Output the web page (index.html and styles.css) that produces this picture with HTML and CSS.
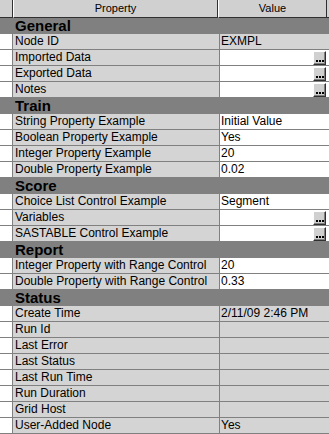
FILE: index.html
```html
<!DOCTYPE html>
<html>
<head>
<meta charset="utf-8">
<link rel="stylesheet" href="styles.css">
</head>
<body>
<div class="grid">
  <div class="head">
    <div class="hind"></div>
    <div class="hcell hname">Property</div>
    <div class="hcell hval">Value</div>
    <div class="hrest"></div>
  </div>

  <div class="cat">General</div>
  <div class="row"><div class="ind"></div><div class="name">Node ID</div><div class="val ro">EXMPL</div></div>
  <div class="row"><div class="ind"></div><div class="name">Imported Data</div><div class="val"><span></span><span class="btn"><i></i><i></i><i></i></span></div></div>
  <div class="row"><div class="ind"></div><div class="name">Exported Data</div><div class="val"><span></span><span class="btn"><i></i><i></i><i></i></span></div></div>
  <div class="row"><div class="ind"></div><div class="name">Notes</div><div class="val"><span></span><span class="btn"><i></i><i></i><i></i></span></div></div>

  <div class="cat">Train</div>
  <div class="row"><div class="ind"></div><div class="name">String Property Example</div><div class="val">Initial Value</div></div>
  <div class="row"><div class="ind"></div><div class="name">Boolean Property Example</div><div class="val">Yes</div></div>
  <div class="row"><div class="ind"></div><div class="name">Integer Property Example</div><div class="val">20</div></div>
  <div class="row"><div class="ind"></div><div class="name">Double Property Example</div><div class="val">0.02</div></div>

  <div class="cat">Score</div>
  <div class="row"><div class="ind"></div><div class="name">Choice List Control Example</div><div class="val">Segment</div></div>
  <div class="row"><div class="ind"></div><div class="name">Variables</div><div class="val"><span></span><span class="btn"><i></i><i></i><i></i></span></div></div>
  <div class="row"><div class="ind"></div><div class="name">SASTABLE Control Example</div><div class="val"><span></span><span class="btn"><i></i><i></i><i></i></span></div></div>

  <div class="cat">Report</div>
  <div class="row"><div class="ind"></div><div class="name">Integer Property with Range Control</div><div class="val">20</div></div>
  <div class="row"><div class="ind"></div><div class="name">Double Property with Range Control</div><div class="val">0.33</div></div>

  <div class="cat">Status</div>
  <div class="row"><div class="ind"></div><div class="name">Create Time</div><div class="val ro">2/11/09 2:46 PM</div></div>
  <div class="row"><div class="ind"></div><div class="name">Run Id</div><div class="val ro"></div></div>
  <div class="row"><div class="ind"></div><div class="name">Last Error</div><div class="val ro"></div></div>
  <div class="row"><div class="ind"></div><div class="name">Last Status</div><div class="val ro"></div></div>
  <div class="row"><div class="ind"></div><div class="name">Last Run Time</div><div class="val ro"></div></div>
  <div class="row"><div class="ind"></div><div class="name">Run Duration</div><div class="val ro"></div></div>
  <div class="row"><div class="ind"></div><div class="name">Grid Host</div><div class="val ro"></div></div>
  <div class="row"><div class="ind"></div><div class="name">User-Added Node</div><div class="val ro">Yes</div></div>
</div>
</body>
</html>
```
FILE: styles.css
```css
html, body {
  margin: 0;
  padding: 0;
  background: #d4d4d4;
}
body {
  width: 329px;
  height: 434px;
  overflow: hidden;
  font-family: "Liberation Sans", Arial, sans-serif;
  color: #000;
}
.grid {
  display: flex;
  flex-direction: column;
  width: 329px;
}
.head {
  display: flex;
  height: 18px;
  background: #d0d0d0;
}
.hind {
  width: 12px;
  border-right: 1px solid #303030;
  border-bottom: 1px solid #303030;
}
.hcell {
  box-sizing: border-box;
  height: 18px;
  border-left: 1px solid #ffffff;
  border-right: 1px solid #303030;
  border-bottom: 1px solid #303030;
  font-size: 11px;
  line-height: 17px;
  text-align: center;
}
.hname {
  width: 205px;
}
.hval {
  width: 109px;
}
.hrest {
  flex: 1;
  border-bottom: 1px solid #303030;
}
.cat {
  height: 16px;
  background: #808080;
  font-weight: bold;
  font-size: 15px;
  line-height: 16px;
  padding-left: 15px;
}
.row {
  display: flex;
  height: 15px;
  border-bottom: 1px solid #808080;
}
.ind {
  width: 12px;
  background: #ffffff;
  border-right: 1px solid #808080;
}
.name {
  width: 204px;
  background: #d4d4d4;
  border-right: 1px solid #808080;
  font-size: 12px;
  line-height: 15px;
  padding-left: 2px;
  white-space: nowrap;
  overflow: hidden;
}
.val {
  flex: 1;
  display: flex;
  justify-content: space-between;
  align-items: center;
  background: #ffffff;
  font-size: 12px;
  line-height: 15px;
  padding-left: 1px;
  white-space: nowrap;
}
.val.ro {
  background: #d4d4d4;
}
.btn {
  box-sizing: border-box;
  display: flex;
  justify-content: center;
  align-items: flex-end;
  gap: 1px;
  width: 13px;
  height: 14px;
  margin-right: 3px;
  padding-bottom: 2px;
  background: #d0d0d0;
  border-top: 1px solid #ffffff;
  border-left: 1px solid #ffffff;
  border-right: 1px solid #303030;
  border-bottom: 1px solid #303030;
  box-shadow: inset -1px -1px 0 #808080;
}
.btn i {
  display: block;
  width: 2px;
  height: 2px;
  background: #000;
}
```
